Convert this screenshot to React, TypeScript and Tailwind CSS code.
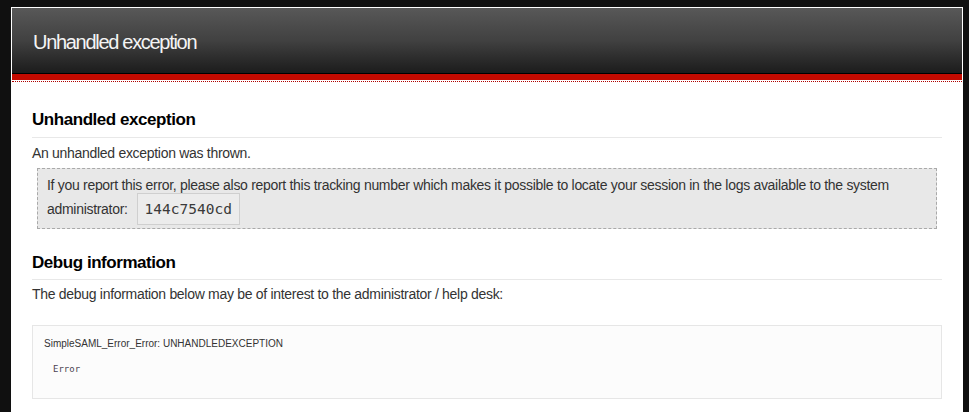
import { FC } from 'react';

const sans = { fontFamily: '"Liberation Sans", Arial, sans-serif' };

const App: FC = () => {
  return (
    <div className="min-h-screen bg-[#101010] pt-[7px] pl-[11px] pr-[6px] font-['Liberation_Sans',Arial,sans-serif]">
      <div className="bg-white border border-white min-h-[420px]">
        {/* header */}
        <div className="h-[65px] bg-gradient-to-b from-[#585858] via-[#414141] to-[#1c1c1c] pt-[22px] pl-[21px]">
          <h1 className="text-[20px] leading-[24px] tracking-[-1.3px] text-[#f4f4f4]">Unhandled exception</h1>
        </div>
        <div className="h-px bg-black" />
        <div className="h-[6px] bg-[#c40a00]" />
        <div className="h-px bg-white" />
        <div className="border-t border-dotted border-[#b00000]" />

        <div className="px-[20px]">
          <h2 className="mt-[26px] pb-[5px] border-b border-[#e8e8e8] text-[17px] leading-[24px] font-bold tracking-[-0.45px] text-black">
            Unhandled exception
          </h2>
          <p className="mt-[5px] text-[14px] leading-[21px] tracking-[-0.3px] text-[#333]">An unhandled exception was thrown.</p>

          <div className="mt-[4px] mx-[5px] border border-dashed border-[#a9a9a9] bg-[#e8e8e8] pt-[4px] pb-[7px] px-[9px] text-[14px] leading-[24px] tracking-[-0.3px] text-[#333]">
            If you report this error, please also report this tracking number which makes it possible to locate your session in the logs available to the system administrator:
            <code className="ml-[9px] border border-[#cfcfcf] bg-[#ececec] px-[7px] py-[7px] font-['DejaVu_Sans_Mono',monospace] text-[14.5px] tracking-normal text-[#3a3a3a]">
              144c7540cd
            </code>
          </div>

          <h2 className="mt-[22px] pb-[4px] border-b border-[#e8e8e8] text-[17px] leading-[24px] font-bold tracking-[-0.45px] text-black">
            Debug information
          </h2>
          <p className="mt-[4px] text-[14px] leading-[21px] tracking-[-0.3px] text-[#333]">
            The debug information below may be of interest to the administrator / help desk:
          </p>

          <div className="mt-[20px] border border-[#e6e6e6] bg-[#fcfcfc] pt-[11px] pb-[23px] px-[11px]" style={sans}>
            <p className="text-[10px] leading-[14px] text-[#333]">SimpleSAML_Error_Error: UNHANDLEDEXCEPTION</p>
            <pre className="mt-[12px] pl-[9px] font-['DejaVu_Sans_Mono',monospace] text-[9px] leading-[12px] text-[#4b4452]">Error</pre>
          </div>
        </div>
      </div>
    </div>
  );
};

export default App;
